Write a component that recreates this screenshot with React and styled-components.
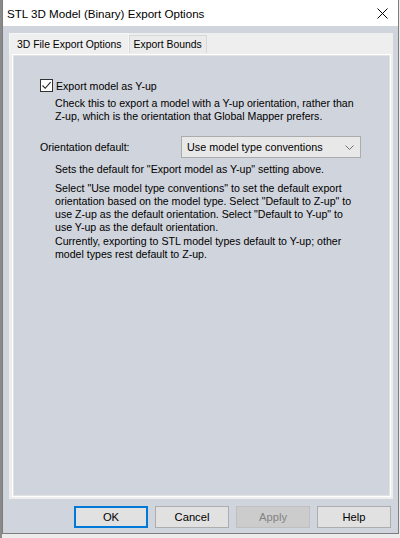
import React from 'react';
import styled, { createGlobalStyle } from 'styled-components';

const GlobalStyle = createGlobalStyle`
    html, body {
        margin: 0;
        padding: 0;
        background: #ececec;
        height: 538px;
        overflow: hidden;
    }
    body {
        font-family: "Liberation Sans", Arial, sans-serif;
        font-size: 10.6px;
        color: #000;
    }
`;

const Desktop = styled.div`
    width: 400px;
    height: 538px;
    display: flex;
    background: linear-gradient(to right, #8a8a8a 0, #8a8a8a 2px, #ececec 2px);
`;

const Window = styled.div`
    width: 395px;
    height: 533px;
    margin-left: 2px;
    display: flex;
    flex-direction: column;
    border: 1px solid #7d7d7d;
    border-top: none;
    background: #d0d4dc;
`;

const TitleBar = styled.div`
    height: 26px;
    flex-shrink: 0;
    background: #fff;
    display: flex;
    align-items: center;
    justify-content: space-between;
    padding: 0 10px 0 4px;
    font-size: 11.6px;
    color: #000;
`;

const Body = styled.div`
    flex: 1;
    display: flex;
    flex-direction: column;
    padding: 7px 5px 4px 6px;
    gap: 7px;
`;

const TabControl = styled.div`
    height: 466px;
    display: flex;
    flex-direction: column;
    background: #eeeeee;
`;

const TabRow = styled.div`
    display: flex;
    align-items: flex-end;
    height: 21px;
    flex-shrink: 0;
`;

const Tab = styled.div`
    height: ${p => (p.$active ? '21px' : '18px')};
    box-sizing: border-box;
    display: flex;
    align-items: center;
    padding: 0 ${p => (p.$active ? '6px' : '4px')} 0 ${p => (p.$active ? '7px' : '4px')};
    background: ${p => (p.$active ? '#efefef' : '#ebebeb')};
    border: 1px solid ${p => (p.$active ? '#f6f6f6' : '#d8d8d8')};
    border-bottom: none;
    font-size: 10.4px;
    margin-bottom: ${p => (p.$active ? '0' : '1px')};
`;

const Panel = styled.div`
    flex: 1;
    margin: 0 2px 2px 3px;
    border: 1px solid #ffffff;
    box-shadow: inset 0 0 0 1px #e2e2e2;
    background: #d0d4dc;
    padding: 24px 10px 0 27px;
    display: flex;
    flex-direction: column;
`;

const CheckRow = styled.label`
    display: flex;
    align-items: center;
    gap: 3px;
    height: 13px;
`;

const CheckBox = styled.span`
    width: 13px;
    height: 13px;
    box-sizing: border-box;
    border: 1px solid #333;
    background: #fff;
    display: flex;
    align-items: center;
    justify-content: center;
`;

const Help = styled.p`
    margin: ${p => p.$top || 0}px 0 0 15px;
    line-height: 13px;
    white-space: nowrap;
`;

const FieldRow = styled.div`
    display: flex;
    align-items: center;
    justify-content: space-between;
    margin-top: 13px;
`;

const Select = styled.div`
    width: 180px;
    height: 22px;
    box-sizing: border-box;
    border: 1px solid #acacac;
    background: #e8e8e8;
    display: flex;
    align-items: center;
    justify-content: space-between;
    padding: 0 6px 0 5px;
    margin-right: 19px;
    font-size: 10.8px;
`;

const ButtonRow = styled.div`
    display: flex;
    justify-content: flex-end;
    gap: 7px;
    padding-right: 2px;
`;

const Button = styled.div`
    width: 74px;
    height: 22px;
    box-sizing: border-box;
    display: flex;
    align-items: center;
    justify-content: center;
    background: ${p => (p.$disabled ? '#cccccc' : '#e1e1e1')};
    border: ${p => (p.$default ? '2px solid #0078d7' : `1px solid ${p.$disabled ? '#bfbfbf' : '#adadad'}`)};
    color: ${p => (p.$disabled ? '#838383' : '#000')};
    font-size: 11.2px;
`;

const Chevron = () => (
    <svg width="9" height="5" viewBox="0 0 9 5">
        <path d="M0.5 0.5 L4.5 4.5 L8.5 0.5" fill="none" stroke="#707070" strokeWidth="1" />
    </svg>
);

const CloseIcon = () => (
    <svg width="11" height="11" viewBox="0 0 11 11">
        <path d="M0.5 0.5 L10.5 10.5 M10.5 0.5 L0.5 10.5" stroke="#000" strokeWidth="1" />
    </svg>
);

const Tick = () => (
    <svg width="11" height="11" viewBox="0 0 11 11">
        <path d="M1.5 5.5 L4.2 8.3 L9.6 2.2" fill="none" stroke="#222" strokeWidth="1.1" />
    </svg>
);

export default function App() {
    return (
        <Desktop>
            <GlobalStyle />
            <Window>
                <TitleBar>
                    <span>STL 3D Model (Binary) Export Options</span>
                    <CloseIcon />
                </TitleBar>
                <Body>
                    <TabControl>
                        <TabRow>
                            <Tab $active>3D File Export Options</Tab>
                            <Tab>Export Bounds</Tab>
                        </TabRow>
                        <Panel>
                            <CheckRow>
                                <CheckBox><Tick /></CheckBox>
                                Export model as Y-up
                            </CheckRow>
                            <Help $top={5}>
                                Check this to export a model with a Y-up orientation, rather than<br />
                                Z-up, which is the orientation that Global Mapper prefers.
                            </Help>
                            <FieldRow>
                                <span>Orientation default:</span>
                                <Select>
                                    <span>Use model type conventions</span>
                                    <Chevron />
                                </Select>
                            </FieldRow>
                            <Help $top={5}>
                                Sets the default for "Export model as Y-up" setting above.
                            </Help>
                            <Help $top={6}>
                                Select "Use model type conventions" to set the default export<br />
                                orientation based on the model type. Select "Default to Z-up" to<br />
                                use Z-up as the default orientation. Select "Default to Y-up" to<br />
                                use Y-up as the default orientation.
                            </Help>
                            <Help $top={1}>
                                Currently, exporting to STL model types default to Y-up; other<br />
                                model types rest default to Z-up.
                            </Help>
                        </Panel>
                    </TabControl>
                    <ButtonRow>
                        <Button $default>OK</Button>
                        <Button>Cancel</Button>
                        <Button $disabled>Apply</Button>
                        <Button>Help</Button>
                    </ButtonRow>
                </Body>
            </Window>
        </Desktop>
    );
}
